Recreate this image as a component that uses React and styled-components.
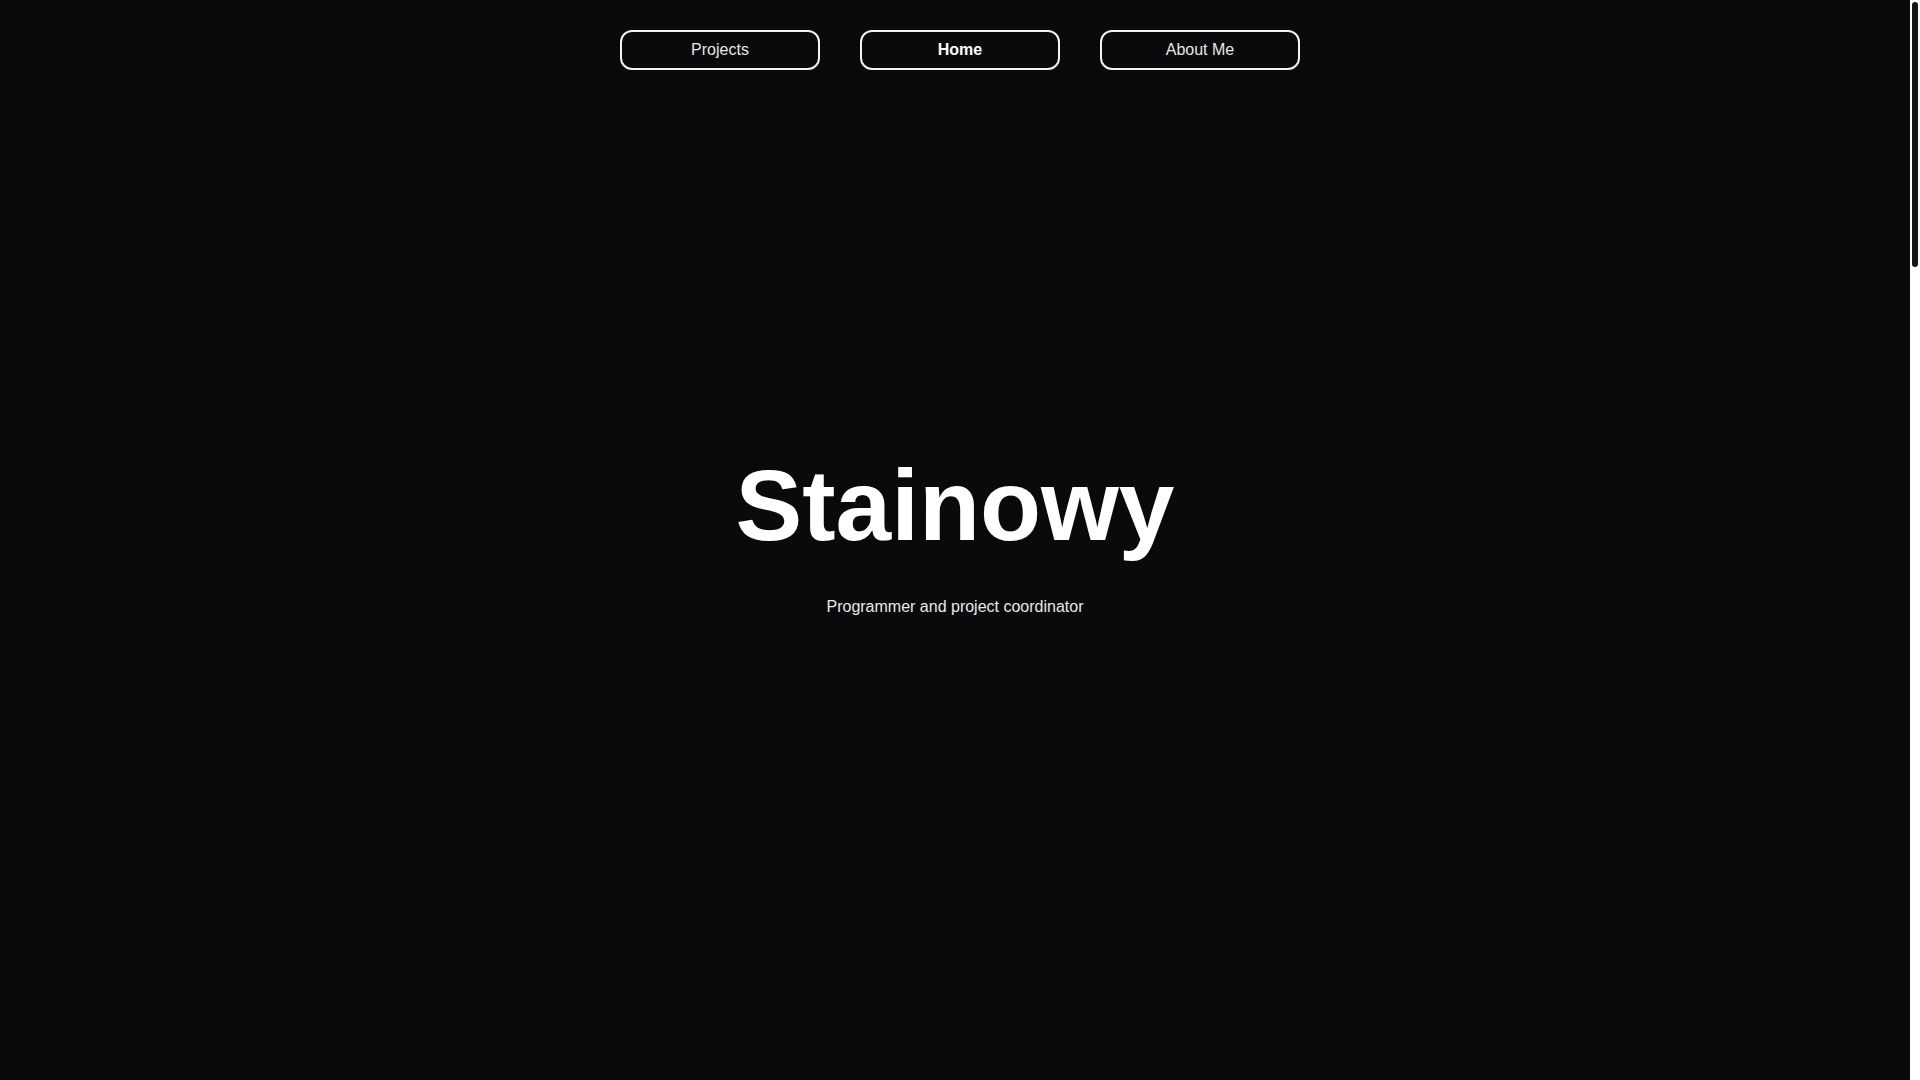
import styled, { createGlobalStyle } from "styled-components"

const GlobalStyle = createGlobalStyle`
  html, body {
    margin: 0;
    padding: 0;
    background: #0a0a0a;
    font-family: "Liberation Sans", Arial, sans-serif;
  }

  ::-webkit-scrollbar {
    width: 10px;
  }

  ::-webkit-scrollbar-track {
    background: #ffffff;
  }

  ::-webkit-scrollbar-thumb {
    background: #161616;
    border: 2px solid #ffffff;
    border-radius: 6px;
  }
`;

const Page = styled.div`
  display: flex;
  flex-direction: column;
  padding-right: 10px;
  background: #0a0a0a;
  color: #ffffff;
`;

/* drawn rail, the headless browser hides the real one */
const ScrollRail = styled.div`
  position: fixed;
  top: 0;
  right: 0;
  width: 10px;
  height: 100vh;
  background: #ffffff;
  z-index: 10;
`;

const ScrollThumb = styled.div`
  margin: 2px 2px 0;
  height: 265px;
  border-radius: 3px;
  background: #161616;
`;

const Nav = styled.nav`
  display: flex;
  justify-content: center;
  gap: 40px;
  padding: 30px 0 0 10px;
`;

const NavButton = styled.button`
  width: 200px;
  height: 40px;
  box-sizing: border-box;
  border: 2px solid #f2f2f2;
  border-radius: 12px;
  background: transparent;
  color: ${props => (props.$active ? "#ffffff" : "#e6e6e6")};
  font-family: "Liberation Sans", Arial, sans-serif;
  font-size: 16px;
  font-weight: ${props => (props.$active ? 700 : 400)};
  cursor: pointer;

  &:hover {
    opacity: 80%;
  }
`;

const Hero = styled.section`
  display: flex;
  flex-direction: column;
  align-items: center;
  padding-top: 378px;
  min-height: 1009px;
  box-sizing: border-box;
`;

const Title = styled.h1`
  margin: 0;
  font-size: 100px;
  font-weight: 700;
  color: #ffffff;
`;

const Subtitle = styled.p`
  margin: 35px 0 0;
  font-size: 16px;
  color: #e8e8e8;
`;

const Section = styled.section`
  min-height: 1110px;
`;

const menuItems = [
  { name: "Projects" },
  { name: "Home", active: true },
  { name: "About Me" },
];

const App = () => {
  return (
    <>
      <GlobalStyle />
      <Page>
        <Nav>
          {menuItems.map(item => (
            <NavButton key={item.name} $active={item.active}>
              {item.name}
            </NavButton>
          ))}
        </Nav>
        <Hero>
          <Title>Stainowy</Title>
          <Subtitle>Programmer and project coordinator</Subtitle>
        </Hero>
        <Section id="projects" />
        <Section id="about" />
        <Section id="contact" />
      </Page>
      <ScrollRail>
        <ScrollThumb />
      </ScrollRail>
    </>
  )
}

export default App
